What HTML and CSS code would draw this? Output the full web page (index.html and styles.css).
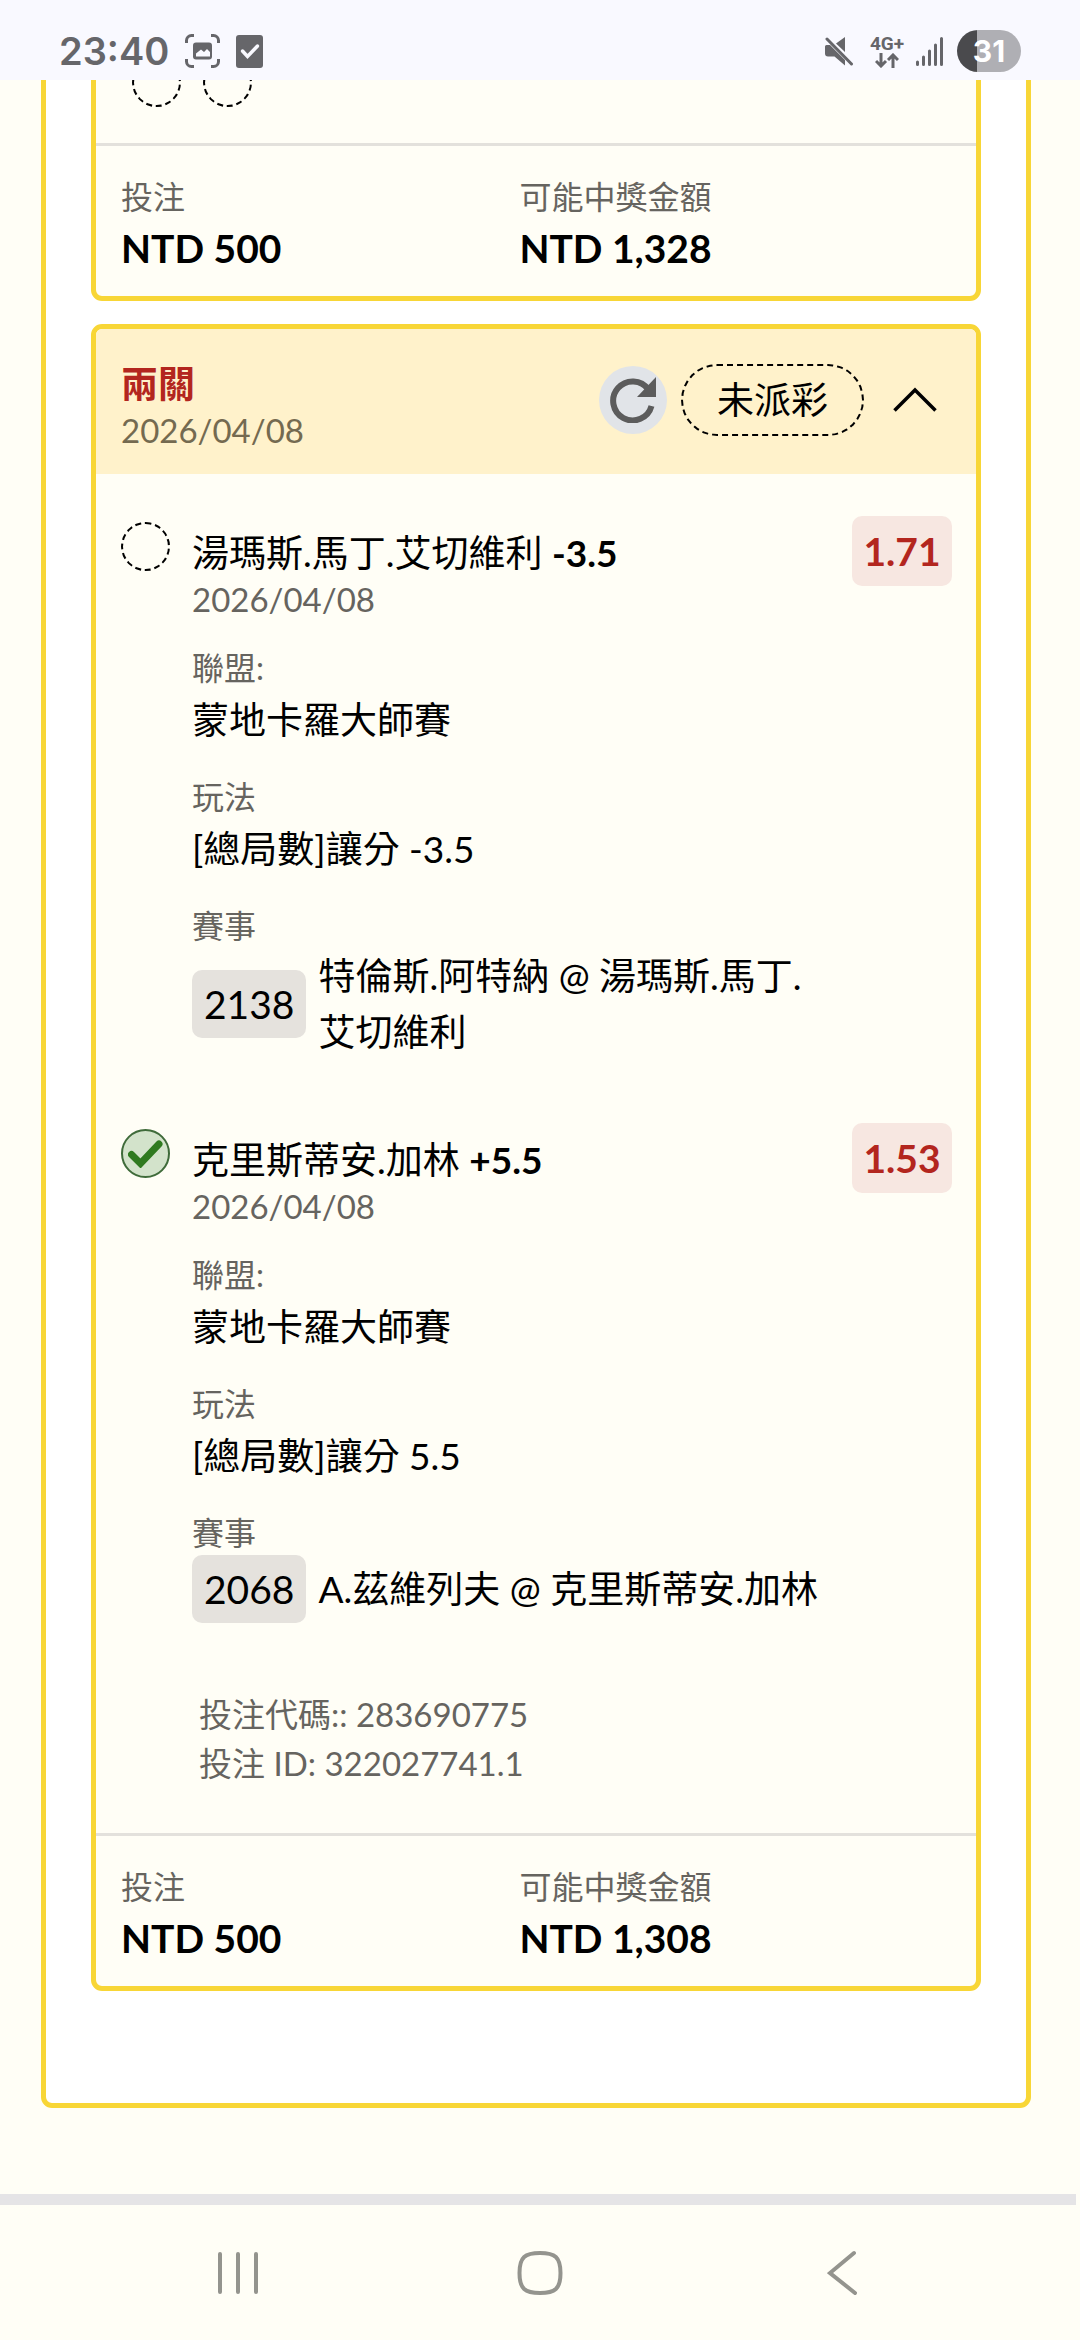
FILE: index.html
```html
<!DOCTYPE html>
<html lang="zh-Hant">
<head>
    <meta charset="UTF-8">
    <meta name="viewport" content="width=device-width, initial-scale=1.0">
    <title>投注紀錄</title>
    <link rel="stylesheet" href="styles.css">
</head>
<body>
    <header class="status-bar">
        <div class="status-group">
            <span class="clock">23:40</span>
            <svg class="icon-shot" width="35" height="34" viewBox="0 0 35 34" fill="none">
                <path d="M1.500 9V6.500a5 5 0 0 1 5-5H9M26 1.500h2.500a5 5 0 0 1 5 5V9M33.500 25v2.500a5 5 0 0 1-5 5H26M9 32.500H6.500a5 5 0 0 1-5-5V25" stroke="#66666a" stroke-width="3"/>
                <rect x="8" y="8.500" width="19" height="17" rx="3" fill="#66666a"/>
                <path d="M11 22.500v-3l5-4 3 2.500 3-3 3 3v4.500z" fill="#f9f9ff"/>
            </svg>
            <svg class="icon-task" width="27" height="34" viewBox="0 0 27 34" fill="none">
                <rect y="1" width="27" height="33" rx="3" fill="#66666a"/>
                <path d="M6.500 17l5 5.500L21.500 12" stroke="#f9f9ff" stroke-width="3.500" stroke-linecap="round"/>
            </svg>
        </div>
        <div class="status-group">
            <svg width="30" height="30" viewBox="0 0 30 30">
                <path d="M21 1v15L12 7.500zM1 10.500q0-1.500 1.500-1.500H6l15 15v5.500L10.500 20.500H4q-3 0-3-3z" fill="#66666a"/>
                <path d="M3 3l24.500 25" stroke="#66666a" stroke-width="3" stroke-linecap="round"/>
            </svg>
            <div class="network">
                <span class="network-type">4G+</span>
                <svg width="24" height="15" viewBox="0 0 24 15" fill="none" stroke="#66666a" stroke-width="3">
                    <path d="M6 0v13M1 8l5 5 5-5M18 15V2M13 7l5-5 5 5"/>
                </svg>
            </div>
            <svg class="icon-signal" width="27" height="30" viewBox="0 0 27 30" stroke="#66666a" stroke-width="3" stroke-linecap="round">
                <path d="M1.500 26v2.500M7.500 21v7.500M13.500 15v13.500M19.500 9v19.500M25.500 2.500v26"/>
            </svg>
            <div class="battery"><span>31</span></div>
        </div>
    </header>

    <main class="page">
        <section class="panel">
            <article class="bet">
                <div class="bet-results">
                    <span class="result"></span>
                    <span class="result"></span>
                </div>
                <dl class="bet-footer">
                    <div>
                        <dt>投注</dt>
                        <dd>NTD 500</dd>
                    </div>
                    <div>
                        <dt>可能中獎金額</dt>
                        <dd>NTD 1,328</dd>
                    </div>
                </dl>
            </article>

            <article class="bet">
                <div class="bet-header">
                    <div class="bet-title">
                        <h2>兩關</h2>
                        <time>2026/04/08</time>
                    </div>
                    <button class="refresh" type="button" aria-label="重新整理">
                        <svg width="46" height="46" viewBox="0 0 46 46">
                            <path d="M38.500 12.500A19.500 19.500 0 1 0 41.500 29" fill="none" stroke="#5c5c5c" stroke-width="6"/>
                            <path d="M46 0v20H27z" fill="#5c5c5c"/>
                        </svg>
                    </button>
                    <span class="bet-state">未派彩</span>
                    <button class="toggle" type="button" aria-label="收合">
                        <svg width="46" height="26" viewBox="0 0 46 26">
                            <path d="M2.500 23.500L23 3l20.500 20.500" fill="none" stroke="#000" stroke-width="3.500"/>
                        </svg>
                    </button>
                </div>

                <div class="bet-body">
                    <div class="leg">
                        <span class="result"></span>
                        <div class="leg-info">
                            <h3>湯瑪斯.馬丁.艾切維利 <strong>-3.5</strong></h3>
                            <time>2026/04/08</time>
                            <dl class="leg-details">
                                <dt>聯盟:</dt>
                                <dd>蒙地卡羅大師賽</dd>
                                <dt>玩法</dt>
                                <dd>[總局數]讓分 -3.5</dd>
                                <dt>賽事</dt>
                                <dd class="match">
                                    <span class="match-no">2138</span>
                                    <span>特倫斯.阿特納 @ 湯瑪斯.馬丁.艾切維利</span>
                                </dd>
                            </dl>
                        </div>
                        <span class="odds">1.71</span>
                    </div>

                    <div class="leg">
                        <span class="result result-won">
                            <svg width="35" height="28" viewBox="0 0 35 28">
                                <path d="M3.500 14.500l9 9L31 4" fill="none" stroke="#2f7a1f" stroke-width="7" stroke-linecap="round"/>
                            </svg>
                        </span>
                        <div class="leg-info">
                            <h3>克里斯蒂安.加林 <strong>+5.5</strong></h3>
                            <time>2026/04/08</time>
                            <dl class="leg-details">
                                <dt>聯盟:</dt>
                                <dd>蒙地卡羅大師賽</dd>
                                <dt>玩法</dt>
                                <dd>[總局數]讓分 5.5</dd>
                                <dt>賽事</dt>
                                <dd class="match">
                                    <span class="match-no">2068</span>
                                    <span>A.茲維列夫 @ 克里斯蒂安.加林</span>
                                </dd>
                            </dl>
                        </div>
                        <span class="odds">1.53</span>
                    </div>

                    <div class="bet-ids">
                        <p>投注代碼:: 283690775</p>
                        <p>投注 ID: 322027741.1</p>
                    </div>
                </div>

                <dl class="bet-footer">
                    <div>
                        <dt>投注</dt>
                        <dd>NTD 500</dd>
                    </div>
                    <div>
                        <dt>可能中獎金額</dt>
                        <dd>NTD 1,308</dd>
                    </div>
                </dl>
            </article>
        </section>
    </main>

    <div class="scroll-track"></div>

    <nav class="nav-bar">
        <button type="button" aria-label="最近使用">
            <svg width="42" height="44" viewBox="0 0 42 44" stroke="#94948e" stroke-width="4" stroke-linecap="round">
                <path d="M3 3v38M21 3v38M39 3v38"/>
            </svg>
        </button>
        <button type="button" aria-label="首頁">
            <svg width="46" height="46" viewBox="0 0 46 46">
                <path d="M23 3C38 3 43.500 7 43.500 23S38 43 23 43 2.500 39 2.500 23 8 3 23 3z" fill="none" stroke="#94948e" stroke-width="4"/>
            </svg>
        </button>
        <button type="button" aria-label="返回">
            <svg width="30" height="46" viewBox="0 0 30 46">
                <path d="M27 3L3 23l25 20" fill="none" stroke="#94948e" stroke-width="4" stroke-linecap="round"/>
            </svg>
        </button>
    </nav>
</body>
</html>
```
FILE: styles.css
```css
* {
    margin: 0;
    padding: 0;
    box-sizing: border-box;
}

body {
    font-family: Lato, 'Noto Sans CJK TC', sans-serif;
    font-size: 37px;
    color: #000;
    background: #fffef6;
    min-height: 100vh;
    display: flex;
    flex-direction: column;
}

button {
    border: none;
    background: none;
    cursor: pointer;
}

svg {
    display: block;
}

/* status bar stays above the scrolled list */
.status-bar {
    position: fixed;
    top: 0;
    left: 0;
    right: 0;
    z-index: 10;
    height: 80px;
    padding: 22px 59px 0 59px;
    background: #f9f9ff;
    color: #66666a;
    display: flex;
    justify-content: space-between;
}

.status-group {
    display: flex;
    align-items: center;
    height: 58px;
}

.clock {
    font-family: Inter, sans-serif;
    font-size: 38px;
    font-weight: 600;
}

.icon-shot,
.icon-task {
    margin-left: 16px;
}

.network {
    width: 38px;
    margin-left: 14px;
    display: flex;
    flex-direction: column;
    align-items: center;
}

.network-type {
    font-family: Roboto, sans-serif;
    font-size: 19px;
    font-weight: 700;
    line-height: 18px;
}

.icon-signal {
    margin-left: 10px;
}

.battery {
    width: 64px;
    height: 42px;
    margin-left: 14px;
    border-radius: 21px;
    background: linear-gradient(90deg, #4a4a4d 31%, #afafb4 31%);
    color: #fff;
    font-family: Inter, sans-serif;
    font-size: 30px;
    font-weight: 700;
    line-height: 42px;
    text-align: center;
}

.page {
    flex: 1;
    padding: 0 49px 84px 41px;
}

.panel {
    margin-top: -24px;
    padding: 0 45px 112px;
    background: #fff;
    border: 5px solid #f8d636;
    border-radius: 11px;
    display: flex;
    flex-direction: column;
    gap: 23px;
}

.bet {
    background: #fffef6;
    border: 5px solid #f8d636;
    border-radius: 11px;
    overflow: hidden;
}

.bet-results {
    display: flex;
    gap: 22px;
    padding: 72px 36px 36px;
}

.result {
    flex: none;
    width: 49px;
    height: 49px;
    border: 2px dashed #000;
    border-radius: 50%;
}

.result-won {
    border: 2px solid #3f6b3a;
    background: #d3e3cb;
    display: flex;
    align-items: center;
    justify-content: center;
}

.bet-header {
    height: 145px;
    padding: 0 25px 4px;
    background: #fff2cb;
    display: flex;
    align-items: center;
}

.bet-title {
    flex: 1;
    padding-top: 16px;
}

h2 {
    font-size: 37px;
    font-weight: 700;
    line-height: 44px;
    color: #b3261e;
}

time {
    display: block;
    font-size: 33px;
    line-height: 48px;
    color: #66645f;
}

.bet-title time {
    color: #746a50;
}

.refresh {
    width: 68px;
    height: 68px;
    border-radius: 50%;
    background: #e1e4e8;
    display: flex;
    align-items: center;
    justify-content: center;
}

.bet-state {
    height: 72px;
    margin-left: 14px;
    padding: 0 34px;
    border: 2px dashed #000;
    border-radius: 36px;
    line-height: 68px;
}

.toggle {
    margin: 0 13px 0 28px;
}

.bet-body {
    padding: 42px 24px 45px 25px;
}

.leg {
    display: flex;
    align-items: flex-start;
    margin-bottom: 63px;
}

.leg .result {
    margin-top: 6px;
}

.leg-info {
    flex: 1;
    margin: 0 22px;
    padding-top: 15px;
}

h3 {
    font-size: 37px;
    font-weight: 400;
    line-height: 44px;
}

.leg-details {
    margin-top: 21px;
}

.leg-details dt {
    font-size: 32px;
    line-height: 48px;
    color: #66645f;
}

.leg-details dd {
    line-height: 56px;
    margin-bottom: 25px;
}

.leg-details .match {
    margin: -2px 0 0;
    display: flex;
    align-items: center;
    gap: 12px;
}

.match-no {
    padding: 0 12px;
    height: 68px;
    border-radius: 10px;
    background: #e5e2dd;
    font-size: 39px;
    line-height: 68px;
}

.odds {
    width: 100px;
    height: 70px;
    border-radius: 10px;
    background: #f7e7e1;
    color: #b3261e;
    font-size: 39px;
    font-weight: 700;
    line-height: 70px;
    text-align: center;
}

.bet-ids {
    padding: 4px 0 0 78px;
    font-size: 33px;
    line-height: 49px;
    color: #66645f;
}

.bet-footer {
    padding: 27px 25px 21px;
    border-top: 3px solid #e3e1dc;
    display: grid;
    grid-template-columns: 48% 1fr;
}

.bet-footer dt {
    font-size: 32px;
    line-height: 48px;
    color: #66645f;
}

.bet-footer dd {
    font-size: 39px;
    font-weight: 700;
    line-height: 54px;
}

.scroll-track {
    height: 11px;
    margin-right: 4px;
    background: #e5e4e6;
}

.nav-bar {
    height: 135px;
    padding: 0 8%;
    display: grid;
    grid-template-columns: repeat(3, 1fr);
}

.nav-bar button {
    display: flex;
    align-items: center;
    justify-content: center;
}
```
